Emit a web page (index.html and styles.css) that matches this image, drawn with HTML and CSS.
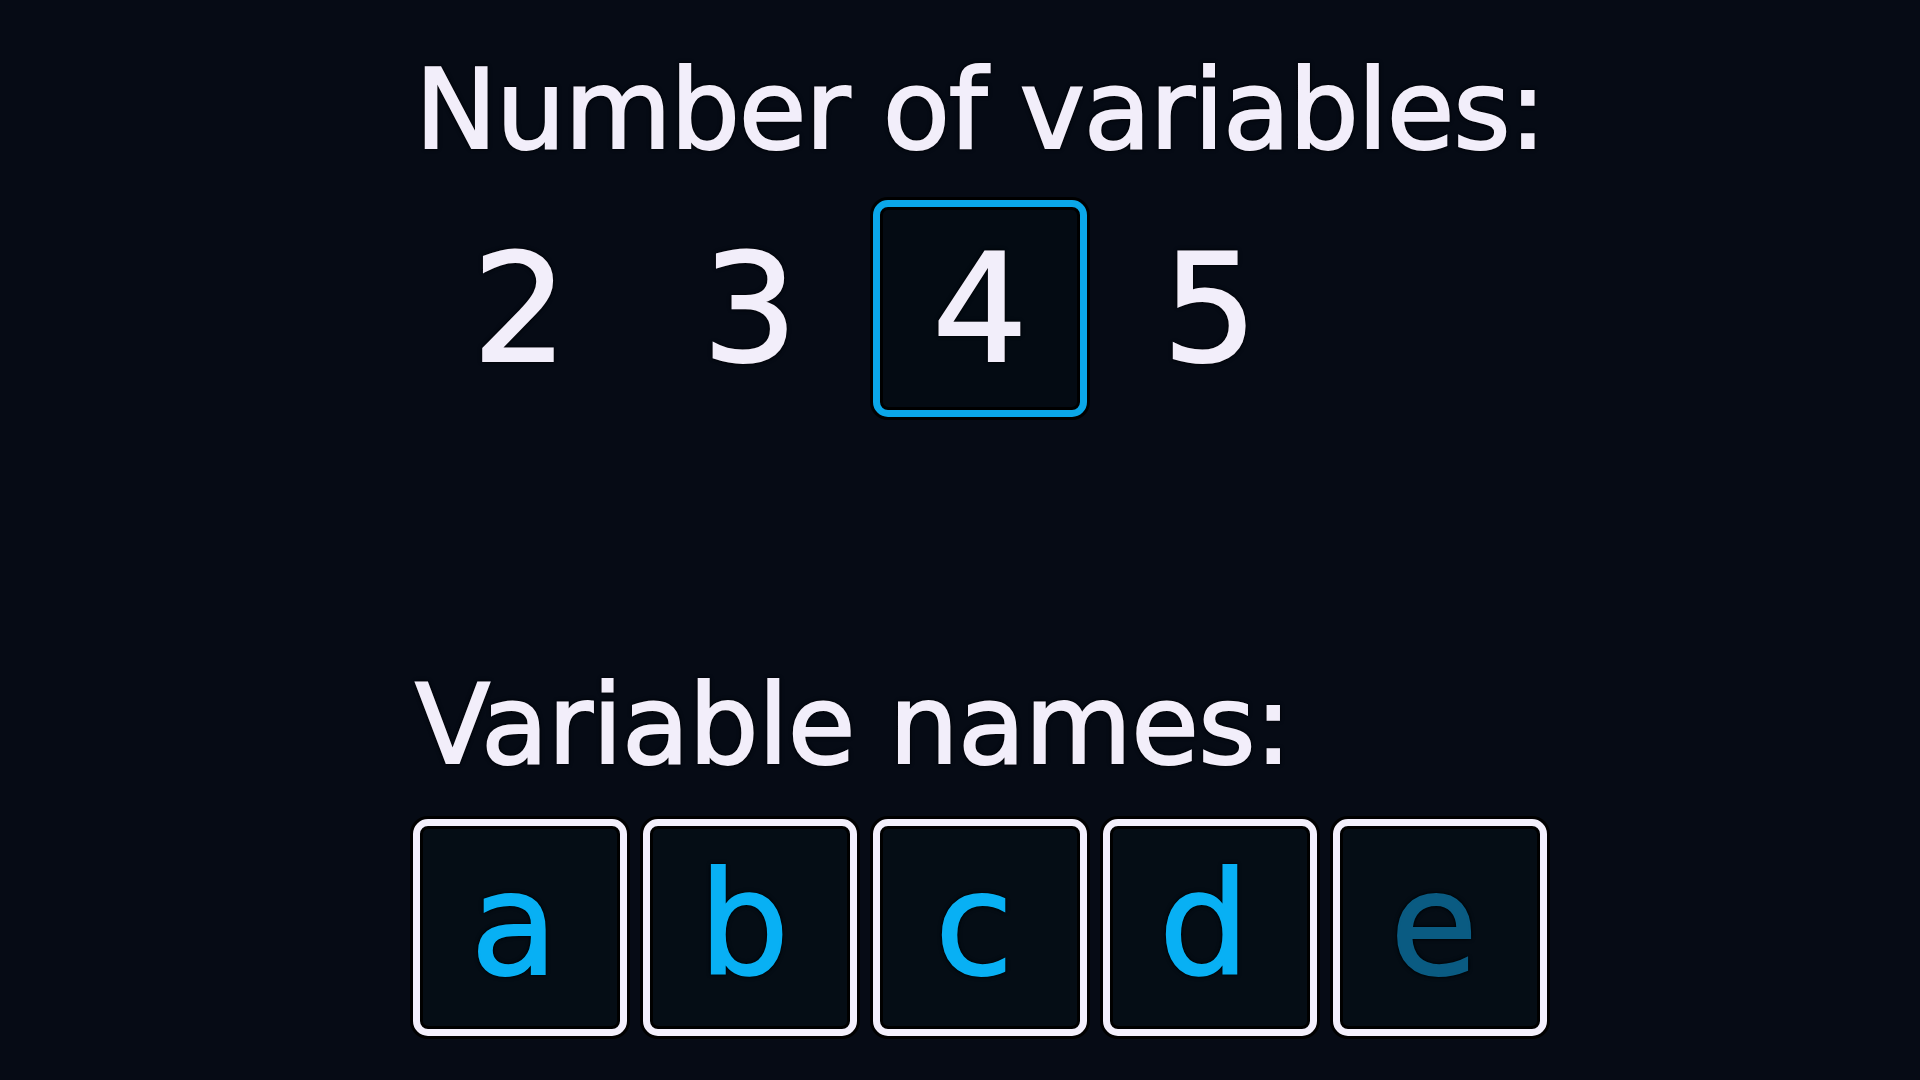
FILE: index.html
```html
<!DOCTYPE html>
<html lang="en">
<head>
<meta charset="utf-8">
<title>Variables</title>
<link rel="stylesheet" href="styles.css">
</head>
<body>
<main class="panel">
  <h1 class="label label-count">Number of variables:</h1>
  <div class="grid count-row">
    <div class="cell num">2</div>
    <div class="cell num">3</div>
    <div class="cell num selected">4</div>
    <div class="cell num">5</div>
  </div>
  <h2 class="label label-names">Variable names:</h2>
  <div class="grid names-row">
    <div class="cell name">a</div>
    <div class="cell name">b</div>
    <div class="cell name">c</div>
    <div class="cell name">d</div>
    <div class="cell name dim">e</div>
  </div>
</main>
</body>
</html>
```
FILE: styles.css
```css
html, body {
  margin: 0;
  padding: 0;
  background: #060b15;
  width: 1920px;
  height: 1080px;
  overflow: hidden;
}

body {
  font-family: "DejaVu Sans", "Liberation Sans", sans-serif;
  color: #f2eefa;
}

.panel {
  display: flex;
  flex-direction: column;
  align-items: flex-start;
  padding-left: 413px;
  padding-top: 46px;
}

.label {
  margin: 0;
  font-weight: normal;
  font-size: 110px;
  line-height: 128px;
  height: 128px;
  letter-spacing: -1.3px;
  -webkit-text-stroke: 2px #f2eefa;
  text-shadow: 0 0 2px #000, 0 0 3px #000, 0 0 5px #000;
  white-space: nowrap;
}

.label-count {
  margin-left: 2px;
}

.label-names {
  margin-top: 244px;
  margin-left: 2px;
  letter-spacing: -0.7px;
}

.grid {
  display: grid;
  grid-template-columns: repeat(5, 214px);
  column-gap: 16px;
}

.count-row {
  margin-top: 26px;
}

.names-row {
  margin-top: 30px;
}

.cell {
  box-sizing: border-box;
  height: 217px;
  display: flex;
  align-items: center;
  justify-content: center;
  font-size: 150px;
  line-height: normal;
  border-radius: 15px;
  text-shadow: 0 0 2px #000, 0 0 3px #000, 0 0 5px #000;
}

.num {
  border: 7px solid transparent;
  color: #f2eefa;
  -webkit-text-stroke: 2px #f2eefa;
}

.num.selected {
  border-color: #0ba7e8;
  background: #040b13;
  box-shadow: 0 0 0 3px #000, inset 0 0 0 3px #000;
}

.name {
  height: 217px;
  border: 7px solid #f4f0fc;
  background: #050d15;
  color: #08b0f4;
  font-size: 142px;
  padding-right: 12px;
  padding-bottom: 6px;
  -webkit-text-stroke: 2px #08b0f4;
  box-shadow: 0 0 0 3px #000, inset 0 0 0 3px #000;
}

.name.dim {
  color: #0a5b82;
  -webkit-text-stroke: 2px #0a5b82;
}
```
